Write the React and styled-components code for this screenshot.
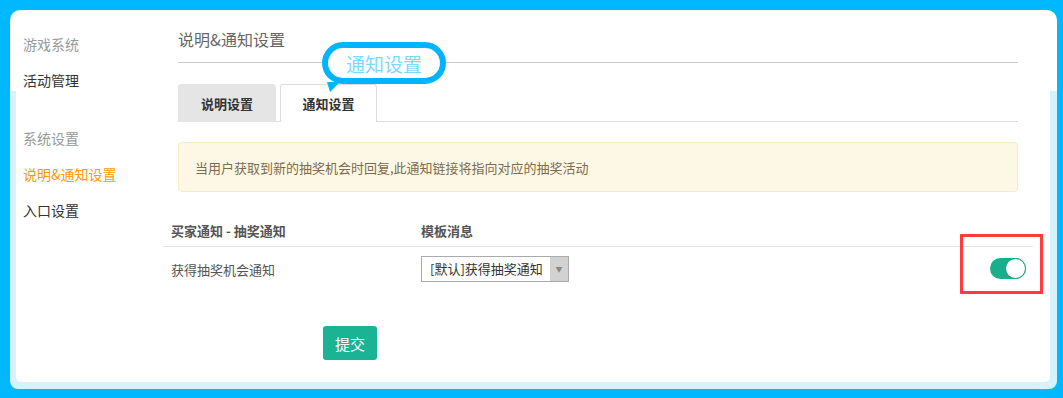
import styled, { createGlobalStyle } from "styled-components";

const GlobalStyle = createGlobalStyle`
  html, body {
    margin: 0;
    padding: 0;
    background: #00b8ff;
  }
  body {
    font-family: "Noto Sans CJK SC", "Noto Sans", sans-serif;
    color: #333;
  }
`;

const Page = styled.div`
  width: 1063px;
  height: 398px;
  padding: 10px 0 0 10px;
  box-sizing: border-box;
`;

const Card = styled.div`
  width: 1047px;
  height: 379px;
  box-sizing: border-box;
  padding: 0 7px 7px 6px;
  border-radius: 10px 10px 8px 8px;
  background: linear-gradient(to bottom, #fff 81px, #d5f2fd 81px);
`;

const Inner = styled.div`
  display: flex;
  height: 100%;
  background: #fff;
  border-radius: 10px 10px 5px 5px;
`;

const Sidebar = styled.div`
  width: 147px;
  box-sizing: border-box;
  padding: 16px 0 0 7px;
  display: flex;
  flex-direction: column;
  gap: 22px;
`;

const MenuGroup = styled.div`
  display: flex;
  flex-direction: column;
`;

const MenuItem = styled.div`
  font-size: 14px;
  line-height: 36px;
  height: 36px;
  color: ${(p) => (p.$group ? "#999" : p.$active ? "#ff9900" : "#333")};
`;

const Main = styled.div`
  position: relative;
  width: 870px;
`;

const Header = styled.div`
  margin: 0 15px;
`;

const Title = styled.div`
  padding: 19px 0 13px;
  font-size: 16px;
  line-height: 20px;
  color: #666;
  border-bottom: 1px solid #ccc;
`;

const TabBar = styled.div`
  display: flex;
  gap: 4px;
  margin-top: 21px;
  border-bottom: 1px solid #ddd;
`;

const Tab = styled.div`
  width: ${(p) => (p.$active ? "97px" : "98px")};
  height: 38px;
  box-sizing: border-box;
  display: flex;
  align-items: center;
  justify-content: center;
  font-size: 13px;
  font-weight: bold;
  color: #333;
  border-radius: 3px 3px 0 0;
  background: ${(p) => (p.$active ? "#fff" : "#e5e5e5")};
  border: ${(p) => (p.$active ? "1px solid #ddd" : "none")};
  border-bottom: none;
  margin-bottom: -1px;
`;

const Notice = styled.div`
  margin-top: 20px;
  height: 50px;
  box-sizing: border-box;
  padding-left: 16px;
  display: flex;
  align-items: center;
  font-size: 13px;
  color: #7d6b4c;
  background: #fdf8e5;
  border: 1px solid #f6ebc6;
  border-radius: 4px;
`;

const Table = styled.div`
  margin-top: 22px;
`;

const Row = styled.div`
  display: flex;
  align-items: center;
  height: ${(p) => (p.$head ? "32px" : "44px")};
  border-bottom: ${(p) => (p.$head ? "1px solid #e2e2e2" : "none")};
  font-size: 13px;
  font-weight: ${(p) => (p.$head ? "bold" : "normal")};
  color: #555;
`;

const Cell = styled.div`
  box-sizing: border-box;
  padding-left: 8px;
  width: ${(p) => p.$w || "auto"};
  flex: ${(p) => (p.$grow ? 1 : "none")};
  display: flex;
  justify-content: ${(p) => (p.$right ? "flex-end" : "flex-start")};
  padding-right: ${(p) => (p.$right ? "7px" : "0")};
`;

const Select = styled.div`
  display: flex;
  width: 148px;
  height: 26px;
  box-sizing: border-box;
  border: 1px solid #aaa;
  background: #fff;
`;

const SelectText = styled.div`
  flex: 1;
  padding-left: 8px;
  line-height: 24px;
  font-size: 13px;
  color: #333;
`;

const SelectArrow = styled.div`
  width: 18px;
  background: #d2d2d2;
  display: flex;
  align-items: center;
  justify-content: center;
  color: #888;
  font-size: 7px;
`;

const ToggleWrap = styled.div`
  position: relative;
  margin-top: -2px;
`;

const Toggle = styled.div`
  width: 36px;
  height: 21px;
  border-radius: 11px;
  background: #1aaf8a;
  position: relative;
  &::after {
    content: "";
    position: absolute;
    top: 0;
    right: 0;
    width: 21px;
    height: 21px;
    box-sizing: border-box;
    border-radius: 50%;
    background: #fff;
    border: 1.5px solid #139a79;
  }
`;

const Highlight = styled.div`
  position: absolute;
  top: -24px;
  left: -30px;
  width: 83px;
  height: 60px;
  box-sizing: border-box;
  border: 3px solid #ff3b3b;
`;

const SubmitButton = styled.button`
  margin: 35px 0 0 160px;
  width: 54px;
  height: 34px;
  border: none;
  border-radius: 3px;
  background: #1ab394;
  color: #fff;
  font-family: "Noto Sans CJK SC", sans-serif;
  font-size: 15px;
  padding: 0;
`;

const Callout = styled.div`
  position: absolute;
  left: 159px;
  top: 32px;
  width: 124px;
  height: 42px;
  box-sizing: border-box;
  border: 6px solid #00b4ff;
  border-radius: 21px;
  background: #fff;
  display: flex;
  align-items: center;
  justify-content: center;
  font-size: 19px;
  color: #7dd8ff;
  &::after {
    content: "";
    position: absolute;
    left: -1px;
    bottom: -14px;
    border-top: 10px solid #00b4ff;
    border-left: 3px solid transparent;
    border-right: 10px solid transparent;
  }
`;

export default function App() {
  return (
    <>
      <GlobalStyle />
      <Page>
        <Card>
          <Inner>
            <Sidebar>
              <MenuGroup>
                <MenuItem $group>游戏系统</MenuItem>
                <MenuItem>活动管理</MenuItem>
              </MenuGroup>
              <MenuGroup>
                <MenuItem $group>系统设置</MenuItem>
                <MenuItem $active>说明&amp;通知设置</MenuItem>
                <MenuItem>入口设置</MenuItem>
              </MenuGroup>
            </Sidebar>
            <Main>
              <Header>
                <Title>说明&amp;通知设置</Title>
                <TabBar>
                  <Tab>说明设置</Tab>
                  <Tab $active>通知设置</Tab>
                </TabBar>
                <Notice>当用户获取到新的抽奖机会时回复,此通知链接将指向对应的抽奖活动</Notice>
              </Header>
              <Table>
                <Row $head>
                  <Cell $w="250px">买家通知 - 抽奖通知</Cell>
                  <Cell $grow>模板消息</Cell>
                </Row>
                <Row>
                  <Cell $w="250px">获得抽奖机会通知</Cell>
                  <Cell $grow>
                    <Select>
                      <SelectText>[默认]获得抽奖通知</SelectText>
                      <SelectArrow>▼</SelectArrow>
                    </Select>
                  </Cell>
                  <Cell $right>
                    <ToggleWrap>
                      <Toggle />
                      <Highlight />
                    </ToggleWrap>
                  </Cell>
                </Row>
              </Table>
              <SubmitButton>提交</SubmitButton>
              <Callout>通知设置</Callout>
            </Main>
          </Inner>
        </Card>
      </Page>
    </>
  );
}
